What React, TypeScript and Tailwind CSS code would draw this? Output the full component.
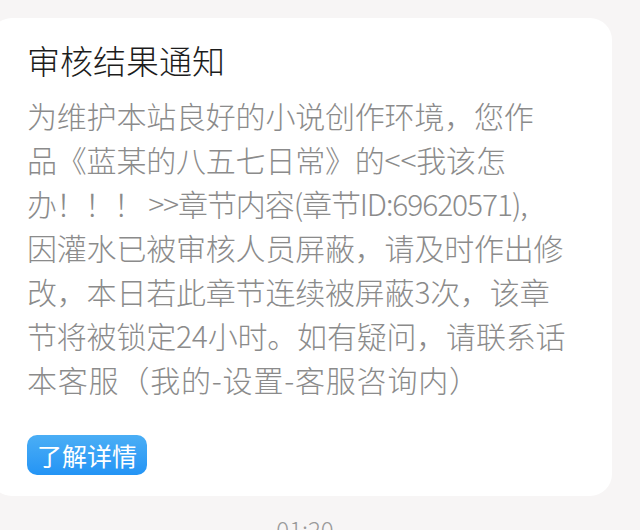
import React from "react";

const lines: { t: string; c: string }[] = [
  { t: "为维护本站良好的小说创作环境，您作", c: "tracking-[-0.2px]" },
  { t: "品《蓝某的八五七日常》的<<我该怎", c: "tracking-[-0.2px]" },
  { t: "办！！！ >>章节内容(章节ID:69620571),", c: "tracking-[-1.1px]" },
  { t: "因灌水已被审核人员屏蔽，请及时作出修", c: "tracking-[-0.2px]" },
  { t: "改，本日若此章节连续被屏蔽3次，该章", c: "tracking-[-0.2px]" },
  { t: "节将被锁定24小时。如有疑问，请联系话", c: "tracking-[-0.2px]" },
  { t: "本客服（我的-设置-客服咨询内）", c: "tracking-[0.8px]" },
];

export default function App() {
  return (
    <div
      className="w-[640px] h-[530px] overflow-hidden bg-[#f7f5f5] flex flex-col"
      style={{ fontFamily: '"Noto Sans CJK SC", "Noto Sans", sans-serif' }}
    >
      <div className="mt-[18px] ml-[-10px] w-[622px] rounded-[22px] bg-white pl-[37px] pt-[20px] pb-[21px] flex flex-col items-start">
        <div className="text-[33px] leading-[44px] text-[#1c1c1c] font-light">审核结果通知</div>
        <div className="mt-[11px] text-[30px] leading-[44px] text-[#8b8b8b] font-light">
          {lines.map((l, i) => (
            <div key={i} className={"whitespace-nowrap " + l.c}>
              {l.t}
            </div>
          ))}
        </div>
        <div className="mt-[34px] h-[40px] w-[120px] rounded-[10px] bg-gradient-to-b from-[#4aaef5] to-[#2394f5] flex items-center justify-center text-white text-[25px] leading-none font-normal">
          了解详情
        </div>
      </div>
      <div className="mt-[18px] text-center text-[24px] leading-[30px] text-[#9a9a9a] pr-[30px] font-light">
        01:20
      </div>
    </div>
  );
}
